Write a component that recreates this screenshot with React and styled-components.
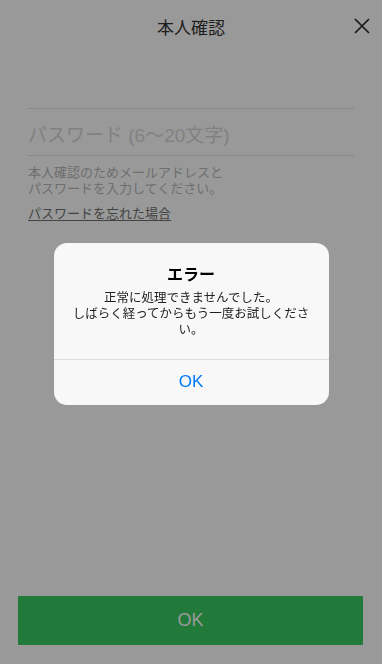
import styled, { createGlobalStyle } from 'styled-components';

const GlobalStyle = createGlobalStyle`
  html, body {
    margin: 0;
    padding: 0;
    background: #fff;
    font-family: "Liberation Sans", "Noto Sans CJK JP", sans-serif;
  }
`;

function CloseIcon() {
  return (
    <svg width="16" height="16" viewBox="0 0 16 16">
      <path d="M1 1 L15 15 M15 1 L1 15" stroke="#2a2a2a" strokeWidth="1.7" fill="none" />
    </svg>
  );
}

function App() {
  return (
    <>
      <GlobalStyle />
      <Page>
        <Header>
          <Title>本人確認</Title>
          <CloseButton aria-label="close">
            <CloseIcon />
          </CloseButton>
        </Header>
        <Form>
          <Field />
          <Field>
            <Input placeholder="パスワード (6〜20文字)" type="password" />
          </Field>
          <HelpText>
            本人確認のためメールアドレスと
            <br />
            パスワードを入力してください。
          </HelpText>
          <ForgotLink href="#">パスワードを忘れた場合</ForgotLink>
        </Form>
        <SubmitButton disabled>OK</SubmitButton>
      </Page>
      <Overlay>
        <Alert>
          <AlertBody>
            <AlertTitle>エラー</AlertTitle>
            <AlertMessage>
              {'正常に処理できませんでした。\nしばらく経ってからもう一度お試しください。'}
            </AlertMessage>
          </AlertBody>
          <AlertAction>OK</AlertAction>
        </Alert>
      </Overlay>
    </>
  );
}

const Page = styled.div`
  height: 664px;
  display: flex;
  flex-direction: column;
  box-sizing: border-box;
`;

const Header = styled.header`
  position: relative;
  height: 54px;
  display: flex;
  align-items: center;
  justify-content: center;
`;

const Title = styled.h1`
  margin: 0 0 2px;
  font-size: 17px;
  font-weight: 400;
  color: #333;
  font-family: "Noto Sans CJK JP", sans-serif;
`;

const CloseButton = styled.button`
  position: absolute;
  right: 12px;
  top: 18px;
  width: 16px;
  height: 16px;
  padding: 0;
  border: 0;
  background: none;
  display: flex;
`;

const Form = styled.div`
  padding: 0 28px;
  display: flex;
  flex-direction: column;
`;

const Field = styled.div`
  height: 47px;
  box-sizing: border-box;
  padding-top: 7px;
  border-bottom: 1px solid #e2e2e2;
  display: flex;
  align-items: center;
  &:first-child {
    height: 55px;
    padding-top: 0;
  }
`;

const Input = styled.input`
  width: 100%;
  border: 0;
  padding: 0;
  outline: none;
  background: transparent;
  font-size: 19px;
  font-family: "Liberation Sans", "Noto Sans CJK JP", sans-serif;
  color: #333;
  &::placeholder {
    color: #d8d8d8;
  }
`;

const HelpText = styled.p`
  margin: 8px 0 0;
  font-size: 13px;
  line-height: 16px;
  color: #b8b8b8;
  font-family: "Noto Sans CJK JP", sans-serif;
`;

const ForgotLink = styled.a`
  margin-top: 9px;
  align-self: flex-start;
  font-size: 13px;
  line-height: 16px;
  color: #707070;
  text-decoration: underline;
  text-underline-offset: 2px;
  font-family: "Noto Sans CJK JP", sans-serif;
`;

const SubmitButton = styled.button`
  margin: auto 19px 19px 18px;
  height: 49px;
  border: 0;
  border-radius: 1px;
  background: #37cb61;
  color: #fff;
  font-size: 18px;
  font-family: "Liberation Sans", sans-serif;
`;

const Overlay = styled.div`
  position: fixed;
  inset: 0;
  background: rgba(0, 0, 0, 0.4);
  display: flex;
  align-items: center;
  justify-content: center;
  padding-bottom: 17px;
`;

const Alert = styled.div`
  width: 275px;
  background: #f8f8f8;
  border-radius: 13px;
  overflow: hidden;
  display: flex;
  flex-direction: column;
`;

const AlertBody = styled.div`
  padding: 19px 16px 22px;
  text-align: center;
  border-bottom: 1px solid #dcdcdc;
`;

const AlertTitle = styled.div`
  font-size: 16px;
  font-weight: 700;
  line-height: 22px;
  color: #000;
  font-family: "Noto Sans CJK JP", sans-serif;
`;

const AlertMessage = styled.div`
  margin-top: 5px;
  font-size: 12.5px;
  line-height: 16px;
  color: #222;
  white-space: pre-line;
  font-family: "Noto Sans CJK JP", sans-serif;
`;

const AlertAction = styled.button`
  height: 45px;
  border: 0;
  background: none;
  color: #007aff;
  font-size: 17px;
  font-family: "Liberation Sans", sans-serif;
`;

export default App;
